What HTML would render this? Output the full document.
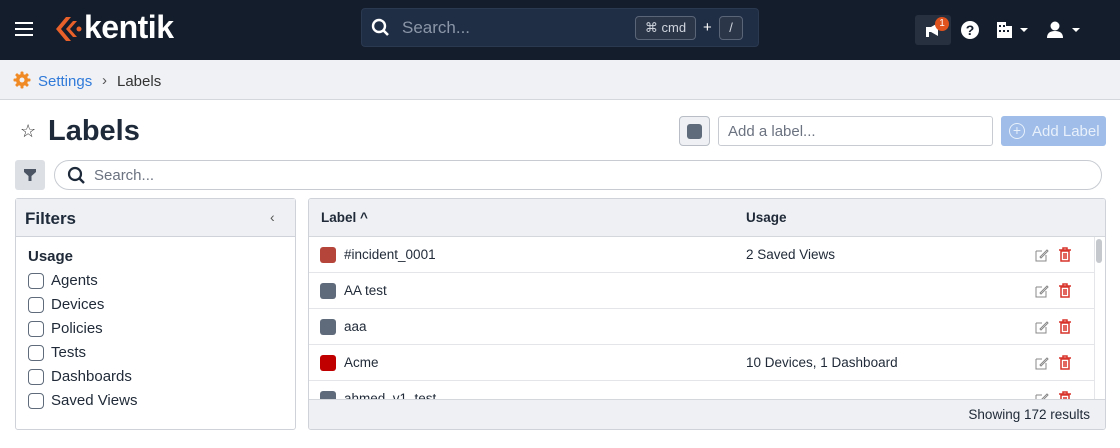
<!DOCTYPE html><html><head><style>
*{box-sizing:border-box;margin:0;padding:0}
body{width:1120px;height:448px;overflow:hidden;font-family:"Liberation Sans",sans-serif;background:#fff;color:#1f2937;position:relative}
.abs{position:absolute}
.nav{left:0;top:0;width:1120px;height:60px;background:#141d2b}
.crumb{left:0;top:60px;width:1120px;height:40px;background:#f0f1f5;border-bottom:1px solid #d4d7dc}
.cb{width:16px;height:16px;border:1.5px solid #5f6b7a;border-radius:4px;display:inline-block;vertical-align:middle;margin-right:7px}
.fi{left:28px;font-size:15px;color:#1f2937;height:24px;line-height:24px}
.row{left:309px;width:785px;height:36px;border-bottom:1px solid #e3e5e8;font-size:13.5px;line-height:36px}
.sw{position:absolute;left:11px;top:10px;width:16px;height:16px;border-radius:3px}
.row .n{position:absolute;left:35px}
.row .u{position:absolute;left:437px}
.ed{position:absolute;left:726px;top:11px}
.tr{position:absolute;left:750px;top:10px}
</style></head><body>
<div class="abs nav"></div>
<div class="abs" style="left:15px;top:22px;width:18px;height:2px;background:#fff;box-shadow:0 6px 0 #fff,0 12px 0 #fff"></div>
<svg class="abs" style="left:54px;top:15px" width="28" height="28" viewBox="0 0 28 28"><path d="M12 2 L2 14 L12 26 L17 26 L7 14 L17 2Z" fill="#e8602a"/><path d="M19 6 L12 14 L19 22 L23 22 L16 14 L23 6Z" fill="#e8602a"/><circle cx="25" cy="14" r="2.5" fill="#e8602a"/></svg>
<div class="abs" style="left:84px;top:9px;color:#fff;font-size:32px;font-weight:bold;letter-spacing:-0.5px">kentik</div>
<div class="abs" style="left:361px;top:8px;width:398px;height:39px;background:#1f2d45;border-radius:4px;border:1px solid #2a3850"></div>
<svg class="abs" style="left:371px;top:18px" width="20" height="20"><circle cx="8" cy="8" r="6" stroke="#fff" stroke-width="2.4" fill="none"/><path d="M12.5 12.5 L17 17" stroke="#fff" stroke-width="2.6"/></svg>
<div class="abs" style="left:402px;top:18px;color:#8b97a8;font-size:17px">Search...</div>
<div class="abs" style="left:635px;top:16px;width:61px;height:24px;border:1px solid #5a6577;border-radius:4px;background:#2b3649;color:#d0d5dd;font-size:13px;line-height:22px;text-align:center">⌘ cmd</div>
<div class="abs" style="left:703px;top:19px;color:#fff;font-size:15px">+</div>
<div class="abs" style="left:719px;top:16px;width:24px;height:24px;border:1px solid #5a6577;border-radius:4px;background:#2b3649;color:#d0d5dd;font-size:13px;line-height:22px;text-align:center">/</div>
<div class="abs" style="left:915px;top:15px;width:36px;height:30px;background:#26303f;border-radius:3px"></div>
<svg class="abs" style="left:924px;top:22px" width="18" height="16"><path d="M2 5 H7 L14 1 V14 L7 10 H5 V15 H2Z" fill="#fff"/></svg>
<div class="abs" style="left:935px;top:17px;width:14px;height:14px;border-radius:7px;background:#e0531f;color:#fff;font-size:10px;text-align:center;line-height:14px">1</div>
<div class="abs" style="left:961px;top:21px;width:18px;height:18px;border-radius:9px;background:#fff;color:#141d2b;font-size:14px;font-weight:bold;text-align:center;line-height:18px">?</div>
<svg class="abs" style="left:996px;top:21px" width="36" height="18"><path d="M1 1 H10 V5 H16 V17 H1Z" fill="#fff"/><rect x="3" y="4" width="2" height="2" fill="#141d2b"/><rect x="7" y="4" width="2" height="2" fill="#141d2b"/><rect x="3" y="9" width="2" height="2" fill="#141d2b"/><rect x="7" y="9" width="2" height="2" fill="#141d2b"/><rect x="11" y="9" width="2" height="2" fill="#141d2b"/><path d="M24 7 H32 L28 11Z" fill="#fff"/></svg>
<svg class="abs" style="left:1046px;top:21px" width="38" height="18"><circle cx="9" cy="5" r="4.5" fill="#fff"/><path d="M1 17 Q1 10 9 10 Q17 10 17 17Z" fill="#fff"/><path d="M26 7 H34 L30 11Z" fill="#fff"/></svg>

<div class="abs crumb"></div>
<svg class="abs" style="left:13px;top:71px" width="18" height="18" viewBox="0 0 18 18"><g fill="#f08a24"><circle cx="9" cy="9" r="6"/><rect x="7.5" y="0.5" width="3" height="17" rx="1"/><rect x="0.5" y="7.5" width="17" height="3" rx="1"/><rect x="7.5" y="0.5" width="3" height="17" rx="1" transform="rotate(45 9 9)"/><rect x="7.5" y="0.5" width="3" height="17" rx="1" transform="rotate(-45 9 9)"/></g><circle cx="9" cy="9" r="2.5" fill="#f0f1f5"/></svg>
<div class="abs" style="left:38px;top:73px;font-size:15px;color:#2f7ad9">Settings</div>
<div class="abs" style="left:102px;top:72px;font-size:15px;color:#555">›</div>
<div class="abs" style="left:117px;top:73px;font-size:15px;color:#333">Labels</div>

<div class="abs" style="left:20px;top:121px;font-size:18px;color:#333">☆</div>
<div class="abs" style="left:48px;top:115px;font-size:29px;font-weight:bold;color:#1e2a3a">Labels</div>
<div class="abs" style="left:679px;top:116px;width:31px;height:30px;border:1px solid #b9bec6;border-radius:4px;background:#eef0f3"></div>
<div class="abs" style="left:687px;top:124px;width:15px;height:15px;border-radius:3px;background:#5f6b7a"></div>
<div class="abs" style="left:718px;top:116px;width:275px;height:30px;border:1px solid #c8ccd2;border-radius:3px;padding-left:9px;line-height:30px;font-size:15px;color:#6b7280">Add a label...</div>
<div class="abs" style="left:1001px;top:116px;width:105px;height:30px;background:#9fbde8;border-radius:3px;color:#e8f0fb;font-size:15px;line-height:31px;padding-left:31px">Add Label</div>
<div class="abs" style="left:1009px;top:123px;width:16px;height:16px;border:1.5px solid #e8f0fb;border-radius:8px;color:#e8f0fb;font-size:14px;line-height:12px;text-align:center">+</div>

<div class="abs" style="left:15px;top:160px;width:30px;height:30px;background:#dcdfe4;border-radius:3px"></div>
<svg class="abs" style="left:23px;top:168px" width="14" height="14"><path d="M1 1 H13 V4 L8.5 8 V13 L5.5 13 V8 L1 4Z" fill="#4b5563"/></svg>
<div class="abs" style="left:54px;top:160px;width:1048px;height:30px;border:1px solid #c8ccd2;border-radius:15px"></div>
<svg class="abs" style="left:67px;top:166px" width="20" height="20"><circle cx="8" cy="8" r="6" stroke="#1e2a3a" stroke-width="2.2" fill="none"/><path d="M12.5 12.5 L17 17" stroke="#1e2a3a" stroke-width="2.4"/></svg>
<div class="abs" style="left:94px;top:167px;font-size:15px;color:#6b7280">Search...</div>

<div class="abs" style="left:15px;top:198px;width:281px;height:232px;border:1px solid #cfd3d9;border-radius:3px"></div>
<div class="abs" style="left:16px;top:199px;width:279px;height:38px;background:#eef0f3;border-bottom:1px solid #cfd3d9"></div>
<div class="abs" style="left:25px;top:209px;font-size:17px;font-weight:bold;color:#1e2a3a">Filters</div>
<div class="abs" style="left:270px;top:209px;font-size:14px;color:#555">‹</div>
<div class="abs fi" style="top:245px;font-weight:bold">Usage</div>
<div class="abs fi" style="top:269px"><span class="cb"></span>Agents</div>
<div class="abs fi" style="top:293px"><span class="cb"></span>Devices</div>
<div class="abs fi" style="top:317px"><span class="cb"></span>Policies</div>
<div class="abs fi" style="top:341px"><span class="cb"></span>Tests</div>
<div class="abs fi" style="top:365px"><span class="cb"></span>Dashboards</div>
<div class="abs fi" style="top:389px"><span class="cb"></span>Saved Views</div>

<div class="abs" style="left:308px;top:198px;width:798px;height:232px;border:1px solid #cfd3d9;border-radius:3px;overflow:hidden;background:#fff">
<div style="position:absolute;left:0;top:0;width:798px;height:38px;background:#eef0f3;border-bottom:1px solid #d4d7dc;font-size:13.5px;font-weight:600;line-height:38px"><span style="position:absolute;left:12px">Label ^</span><span style="position:absolute;left:437px">Usage</span></div>
<div style="position:absolute;left:0;top:200px;width:798px;height:32px;background:#eef0f3;border-top:1px solid #d4d7dc;font-size:13.5px;line-height:30px;text-align:right;padding-right:17px">Showing 172 results</div>
<div style="position:absolute;left:787px;top:40px;width:6px;height:24px;border-radius:3px;background:#c5c8cd"></div>
<div style="position:absolute;left:785px;top:38px;width:1px;height:162px;background:#e3e5e8"></div>
</div>
<div class="abs" style="left:309px;top:237px;width:785px;height:162px;overflow:hidden">
<div class="abs row" style="left:0;top:0"><span class="sw" style="background:#b5453a"></span><span class="n">#incident_0001</span><span class="u">2 Saved Views</span><svg class="ed" width="14" height="14"><path d="M1 3 H7 M1 3 V13 H11 V7" stroke="#888" fill="none"/><path d="M5 9 L12 2 L13 3 L6 10Z" stroke="#888" fill="none"/></svg><svg class="tr" width="12" height="15"><path d="M0 3 H12 M4 3 V1 H8 V3 M2 4 H10 V14 H2Z M5 6 V12 M7 6 V12" stroke="#d9342b" stroke-width="1.5" fill="none"/></svg></div>
<div class="abs row" style="left:0;top:36px"><span class="sw" style="background:#5f6b7a"></span><span class="n">AA test</span><svg class="ed" width="14" height="14"><path d="M1 3 H7 M1 3 V13 H11 V7" stroke="#888" fill="none"/><path d="M5 9 L12 2 L13 3 L6 10Z" stroke="#888" fill="none"/></svg><svg class="tr" width="12" height="15"><path d="M0 3 H12 M4 3 V1 H8 V3 M2 4 H10 V14 H2Z M5 6 V12 M7 6 V12" stroke="#d9342b" stroke-width="1.5" fill="none"/></svg></div>
<div class="abs row" style="left:0;top:72px"><span class="sw" style="background:#5f6b7a"></span><span class="n">aaa</span><svg class="ed" width="14" height="14"><path d="M1 3 H7 M1 3 V13 H11 V7" stroke="#888" fill="none"/><path d="M5 9 L12 2 L13 3 L6 10Z" stroke="#888" fill="none"/></svg><svg class="tr" width="12" height="15"><path d="M0 3 H12 M4 3 V1 H8 V3 M2 4 H10 V14 H2Z M5 6 V12 M7 6 V12" stroke="#d9342b" stroke-width="1.5" fill="none"/></svg></div>
<div class="abs row" style="left:0;top:108px"><span class="sw" style="background:#c00000"></span><span class="n">Acme</span><span class="u">10 Devices, 1 Dashboard</span><svg class="ed" width="14" height="14"><path d="M1 3 H7 M1 3 V13 H11 V7" stroke="#888" fill="none"/><path d="M5 9 L12 2 L13 3 L6 10Z" stroke="#888" fill="none"/></svg><svg class="tr" width="12" height="15"><path d="M0 3 H12 M4 3 V1 H8 V3 M2 4 H10 V14 H2Z M5 6 V12 M7 6 V12" stroke="#d9342b" stroke-width="1.5" fill="none"/></svg></div>
<div class="abs row" style="left:0;top:144px"><span class="sw" style="background:#5f6b7a"></span><span class="n">ahmed_v1_test</span><svg class="ed" width="14" height="14"><path d="M1 3 H7 M1 3 V13 H11 V7" stroke="#888" fill="none"/><path d="M5 9 L12 2 L13 3 L6 10Z" stroke="#888" fill="none"/></svg><svg class="tr" width="12" height="15"><path d="M0 3 H12 M4 3 V1 H8 V3 M2 4 H10 V14 H2Z M5 6 V12 M7 6 V12" stroke="#d9342b" stroke-width="1.5" fill="none"/></svg></div>
</div>
</body></html>
